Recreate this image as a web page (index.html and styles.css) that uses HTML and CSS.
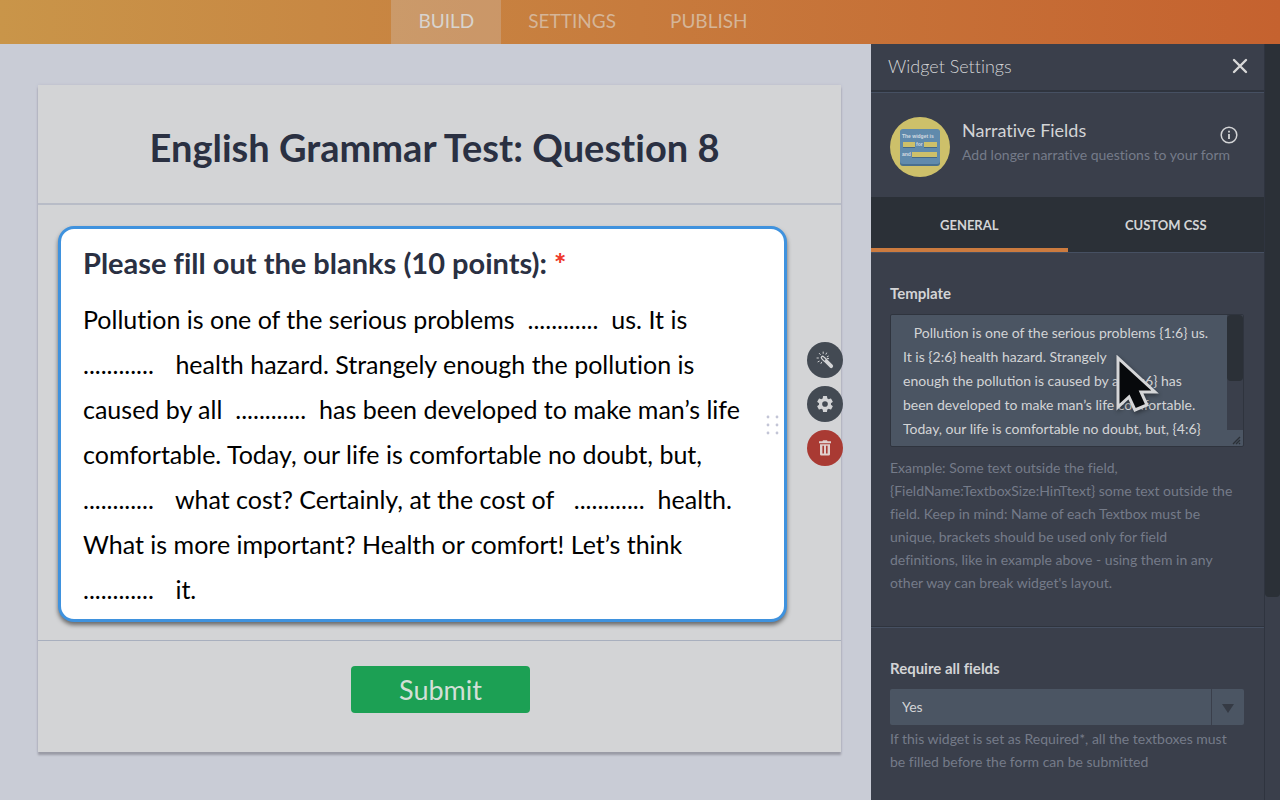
FILE: index.html
```html
<!DOCTYPE html>
<html lang="en">
<head>
    <meta charset="UTF-8">
    <meta name="viewport" content="width=device-width, initial-scale=1.0">
    <title>Form Builder</title>
    <link rel="stylesheet" href="styles.css">
</head>
<body>
    <header class="topbar">
        <nav class="topbar-nav">
            <a href="#build" class="active">BUILD</a>
            <a href="#settings">SETTINGS</a>
            <a href="#publish">PUBLISH</a>
        </nav>
    </header>

    <div class="workspace">
        <!-- Form canvas -->
        <main class="canvas">
            <div class="form">
                <div class="form-header">
                    <h1>English Grammar Test: Question 8</h1>
                </div>

                <div class="form-body">
                    <section class="question">
                        <h2>Please fill out the blanks (10 points): <span class="required">*</span></h2>
                        <p>
                            Pollution is one of the serious problems <span class="blank">............</span> us. It is<br>
                            <span class="blank first">............</span> health hazard. Strangely enough the pollution is<br>
                            caused by all <span class="blank">............</span> has been developed to make man’s life<br>
                            comfortable. Today, our life is comfortable no doubt, but,<br>
                            <span class="blank first">............</span> what cost? Certainly, at the cost of <span class="blank wide">............</span> health.<br>
                            What is more important? Health or comfort! Let’s think<br>
                            <span class="blank first">............</span> it.
                        </p>
                        <svg class="drag-handle" width="14" height="22" viewBox="0 0 14 22" fill="#c3c5d6">
                            <circle cx="2" cy="3" r="1.4"/><circle cx="11" cy="3" r="1.4"/>
                            <circle cx="2" cy="11" r="1.4"/><circle cx="11" cy="11" r="1.4"/>
                            <circle cx="2" cy="19" r="1.4"/><circle cx="11" cy="19" r="1.4"/>
                        </svg>
                    </section>

                    <div class="question-tools">
                        <button type="button" aria-label="Widget settings">
                            <svg width="18" height="18" viewBox="0 0 18 18">
                                <path d="M8.2 8.2L15.2 15.2" stroke="#d3d4d6" stroke-width="3.8" stroke-linecap="round"/>
                                <path d="M6.6 6.6L8.4 8.4" stroke="#d3d4d6" stroke-width="3.8" stroke-linecap="round"/>
                                <path d="M6.7 6.7L8.6 8.6" stroke="#434a53" stroke-width="1.5" stroke-linecap="round"/>
                                <path d="M7.2 1V2.4M10.6 2L10 3.2M12.3 5.2L11.2 5.8M3.3 2.4L4.3 3.5M1 7H2.4M2 10.8L3.2 10.2M5 12.4L5.6 11.2M11.2 7.6H12.6" stroke="#d3d4d6" stroke-width="1" stroke-linecap="round"/>
                            </svg>
                        </button>
                        <button type="button" aria-label="Properties">
                            <svg width="20" height="20" viewBox="0 0 24 24" fill="#d3d4d6">
                                <path d="M19.14 12.94c.04-.3.06-.61.06-.94 0-.32-.02-.64-.07-.94l2.03-1.58a.49.49 0 0 0 .12-.61l-1.92-3.32a.49.49 0 0 0-.59-.22l-2.39.96a7.03 7.03 0 0 0-1.62-.94l-.36-2.54a.48.48 0 0 0-.48-.41h-3.84a.48.48 0 0 0-.47.41l-.36 2.54c-.59.24-1.13.57-1.62.94l-2.39-.96a.48.48 0 0 0-.59.22L2.74 8.87a.48.48 0 0 0 .12.61l2.03 1.58c-.05.3-.09.63-.09.94s.02.64.07.94l-2.03 1.58a.49.49 0 0 0-.12.61l1.92 3.32c.12.22.37.29.59.22l2.39-.96c.5.38 1.03.7 1.62.94l.36 2.54c.05.24.24.41.48.41h3.84c.24 0 .44-.17.47-.41l.36-2.54c.59-.24 1.13-.56 1.62-.94l2.39.96c.22.08.47 0 .59-.22l1.92-3.32a.48.48 0 0 0-.12-.61zM12 15.4a3.4 3.4 0 1 1 0-6.8 3.4 3.4 0 0 1 0 6.8z"/>
                            </svg>
                        </button>
                        <button type="button" class="delete" aria-label="Delete">
                            <svg width="14" height="16" viewBox="0 0 14 16">
                                <path fill="#e0cfce" fill-rule="evenodd" d="M5 0.3H9L9.6 1.2H13V3.2H1V1.2H4.4ZM2 4.2H12V14.2Q12 15.6 10.6 15.6H3.4Q2 15.6 2 14.2ZM4.4 5.8V13.6H6V5.8ZM8 5.8V13.6H9.6V5.8Z"/>
                            </svg>
                        </button>
                    </div>
                </div>

                <div class="form-footer">
                    <button type="submit" class="submit">Submit</button>
                </div>
            </div>
        </main>

        <!-- Widget settings -->
        <aside class="panel">
            <div class="panel-content">
                <div class="panel-title">
                    <h2>Widget Settings</h2>
                    <button type="button" aria-label="Close">
                        <svg width="16" height="16" viewBox="0 0 16 16" stroke="#d8d8d8" stroke-width="2.4" stroke-linecap="round">
                            <path d="M2 2L14 14M14 2L2 14"/>
                        </svg>
                    </button>
                </div>

                <div class="widget">
                    <svg class="widget-logo" width="60" height="60" viewBox="0 0 60 60" font-family="Liberation Sans, sans-serif" font-size="5" font-weight="bold" fill="#d4dbe0">
                        <circle cx="30" cy="30" r="30" fill="#cdc06a"/>
                        <rect x="10" y="13" width="40" height="36" rx="3" fill="#496f8e"/>
                        <rect x="10" y="12" width="40" height="35" rx="3" fill="#608aac"/>
                        <text x="12" y="21">The widget is</text>
                        <text x="26" y="29">for</text>
                        <text x="12" y="39">and</text>
                        <path fill="#466885" d="M13 30H25V31H13ZM34 30H47V31H34ZM22 40H47V41H22Z"/>
                        <path fill="#cdc06a" d="M13 25H25V30H13ZM34 25H47V30H34ZM22 35H47V40H22Z"/>
                    </svg>
                    <div class="widget-text">
                        <h3>Narrative Fields</h3>
                        <p>Add longer narrative questions to your form</p>
                    </div>
                    <button type="button" class="info" aria-label="Info">
                        <svg width="18" height="18" viewBox="0 0 18 18" fill="none" stroke="#d3d4d6">
                            <circle cx="9" cy="9" r="7.8" stroke-width="1.5"/>
                            <path d="M9 8V13" stroke-width="1.8"/>
                            <path d="M9 4.8V6.6" stroke-width="1.8"/>
                        </svg>
                    </button>
                </div>

                <div class="tabs">
                    <button type="button" class="active">GENERAL</button>
                    <button type="button">CUSTOM CSS</button>
                </div>

                <div class="setting template">
                    <label for="template">Template</label>
                    <div class="template-box">
                        <textarea id="template" rows="5" spellcheck="false">   Pollution is one of the serious problems {1:6} us.
It is {2:6} health hazard. Strangely
enough the pollution is caused by all {3:6} has
been developed to make man’s life comfortable.
Today, our life is comfortable no doubt, but, {4:6}</textarea>
                        <div class="template-scroll">
                            <div class="thumb"></div>
                            <svg width="16" height="16" viewBox="0 0 16 16">
                                <path d="M6 14L13 7M9 14L13 10M12 14L13 13" stroke="#2b3037" stroke-width="1.4"/>
                            </svg>
                        </div>
                        <svg class="cursor" width="46" height="60" viewBox="0 0 46 60">
                            <path d="M4 3V52L15 42L21 55L33 50L27 37H41Z" fill="#07090c" stroke="#d5d6d8" stroke-width="3"/>
                        </svg>
                    </div>
                    <p>Example: Some text outside the field,<br>
                    {FieldName:TextboxSize:HinTtext} some text outside the<br>
                    field. Keep in mind: Name of each Textbox must be<br>
                    unique, brackets should be used only for field<br>
                    definitions, like in example above - using them in any<br>
                    other way can break widget's layout.</p>
                </div>

                <div class="setting">
                    <label for="require">Require all fields</label>
                    <div class="select-box">
                        <select id="require">
                            <option>Yes</option>
                            <option>No</option>
                        </select>
                        <span class="arrow"></span>
                    </div>
                    <p>If this widget is set as Required*, all the textboxes must<br>
                    be filled before the form can be submitted</p>
                </div>
            </div>
            <div class="panel-scroll"><div class="thumb"></div></div>
        </aside>
    </div>
</body>
</html>
```
FILE: styles.css
```css
* {
    box-sizing: border-box;
}

body {
    margin: 0;
    min-height: 100vh;
    display: flex;
    flex-direction: column;
    font-family: Lato, sans-serif;
    font-variant-ligatures: none;
    background-color: #c9ccd6;
    color: #2a3042;
}

h1, h2, h3, p {
    margin: 0;
}

button {
    margin: 0;
    padding: 0;
    border: none;
    background: none;
    font-family: inherit;
    color: inherit;
    cursor: pointer;
}

svg {
    display: block;
}

/* Top bar */
.topbar {
    height: 44px;
    padding-right: 114px;
    display: flex;
    justify-content: center;
    background: linear-gradient(90deg, #c99549, #c77b3d 50%, #c5622f);
}

.topbar-nav {
    display: flex;
}

.topbar-nav a {
    padding: 0 27px;
    font-size: 19px;
    line-height: 42px;
    color: #d5b598;
    text-decoration: none;
}

.topbar-nav a.active {
    background-color: rgba(211, 212, 214, 0.27);
    color: #d8d4cf;
}

.workspace {
    flex: 1;
    display: flex;
}

/* Form canvas */
.canvas {
    flex: 1;
    padding: 41px 30px 46px 38px;
}

.form {
    background-color: #d3d4d6;
    box-shadow: 0 3px 2px #9a9ba6, 0 0 3px #bcbccb;
}

.form-header {
    padding: 42px 20px 36px;
    border-bottom: 2px solid #b8bcc7;
    text-align: center;
}

.form-header h1 {
    padding-right: 10px;
    font-size: 38px;
    line-height: 40px;
}

.form-body {
    margin-right: -2px;
    padding: 21px 0 18px 20px;
    display: flex;
    align-items: center;
    gap: 20px;
}

.question {
    flex: 1;
    position: relative;
    padding: 16px 20px 7px 22px;
    border: 3px solid #3f92de;
    border-radius: 16px;
    background-color: white;
    box-shadow: 0 3px 4px rgba(0, 0, 0, 0.5);
}

.question h2 {
    margin-bottom: 16px;
    font-size: 29px;
    line-height: 36px;
}

.question .required {
    color: #ee3a2c;
    font-weight: 900;
}

.question p {
    font-size: 25px;
    line-height: 45px;
    white-space: nowrap;
    color: black;
}

.blank {
    display: inline-block;
    min-width: 74px;
    margin: 0 5px;
    text-align: center;
}

.blank.first {
    min-width: 80px;
    margin-left: 0;
    margin-right: 6px;
    text-align: left;
}

.blank.wide {
    margin-left: 12px;
}

.drag-handle {
    position: absolute;
    right: 4px;
    top: 185px;
}

.question-tools {
    padding-bottom: 40px;
    display: flex;
    flex-direction: column;
    gap: 8px;
}

.question-tools button {
    width: 36px;
    height: 36px;
    border-radius: 50%;
    background-color: #434a53;
    display: flex;
    align-items: center;
    justify-content: center;
}

.question-tools button.delete {
    background-color: #a93a33;
}

.form-footer {
    padding: 25px 0 39px 2px;
    border-top: 1px solid #a8afbe;
    text-align: center;
}

.submit {
    width: 179px;
    height: 47px;
    border-radius: 4px;
    background-color: #1ca054;
    font-size: 27px;
    color: #d3dfd7;
}

/* Widget settings */
.panel {
    width: 409px;
    display: flex;
    background-color: #3a3f4b;
    color: #d3d4d6;
}

.panel-content {
    flex: 1;
}

.panel-scroll {
    width: 16px;
    border-left: 1px solid #2f343f;
}

.panel-scroll .thumb {
    height: 553px;
    border-radius: 0 0 4px 4px;
    background-color: #2b3037;
}

.panel-title {
    height: 48px;
    padding: 0 16px 2px 17px;
    display: flex;
    align-items: center;
    justify-content: space-between;
    border-bottom: 2px solid #2f343e;
}

.panel-title h2 {
    font-size: 18px;
    font-weight: 300;
}

.widget {
    padding: 24px 27px 20px 19px;
    display: flex;
    position: relative;
    gap: 12px;
    border-top: 1px solid #465062;
}

.widget-text h3 {
    font-size: 18px;
    font-weight: 400;
    line-height: 27px;
}

.widget-text p {
    font-size: 14px;
    line-height: 22px;
    color: #757b89;
    white-space: nowrap;
}

.info {
    position: absolute;
    right: 26px;
    top: 33px;
}

.tabs {
    height: 55px;
    display: flex;
    background-color: #2b3037;
}

.tabs button {
    flex: 1;
    padding-top: 4px;
    border-bottom: 4px solid transparent;
    font-size: 13px;
    font-weight: 700;
}

.tabs button.active {
    border-bottom-color: #cc7b3f;
}

.setting {
    padding: 29px 20px 30px 19px;
    border-top: 1px solid #465062;
}

.setting.template {
    padding-bottom: 32px;
    border-bottom: 1px solid #2f343e;
}

.setting label {
    display: block;
    margin-bottom: 10px;
    font-size: 15px;
    font-weight: 700;
    line-height: 22px;
}

.setting p {
    font-size: 14px;
    line-height: 23px;
    color: #757b89;
    white-space: nowrap;
}

.template-box {
    position: relative;
    display: flex;
    margin-bottom: 9px;
    border: 1px solid #2f343e;
    border-radius: 2px;
    background-color: #4b5563;
}

.template-box textarea {
    flex: 1;
    min-width: 0;
    margin: 0;
    padding: 6px 0 5px 12px;
    border: none;
    outline: none;
    resize: none;
    overflow: hidden;
    background: none;
    font-family: inherit;
    font-size: 14px;
    line-height: 24px;
    white-space: pre;
    color: #d3d4d6;
}

.template-scroll {
    width: 16px;
    display: flex;
    flex-direction: column;
    justify-content: space-between;
    background: linear-gradient(#3a3f4b, #3a3f4b) top / 100% 115px no-repeat;
}

.template-scroll .thumb {
    height: 66px;
    border-radius: 4px;
    background-color: #2b3037;
}

.cursor {
    position: absolute;
    left: 223px;
    top: 40px;
    filter: drop-shadow(1px 2px 2px rgba(0, 0, 0, 0.4));
}

.select-box {
    position: relative;
    margin-bottom: 2px;
}

.select-box select {
    display: block;
    width: 100%;
    height: 36px;
    padding: 0 12px 2px;
    border: none;
    border-radius: 2px;
    appearance: none;
    background-color: #4b5563;
    font-family: inherit;
    font-size: 14px;
    color: #d3d4d6;
}

.select-box .arrow {
    position: absolute;
    top: 0;
    right: 0;
    width: 33px;
    height: 36px;
    border-left: 1px solid #3a3f4b;
    display: flex;
    align-items: center;
    justify-content: center;
    pointer-events: none;
}

.select-box .arrow::after {
    content: "";
    margin-top: 2px;
    border: 6px solid transparent;
    border-top: 9px solid #353a44;
    border-bottom: none;
}
```
